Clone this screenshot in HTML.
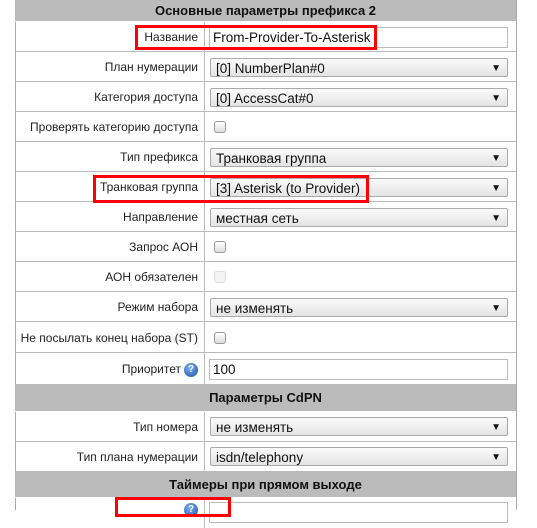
<!DOCTYPE html>
<html><head><meta charset="utf-8"><style>
body{margin:0;width:537px;height:510px;overflow:hidden;background:#fff;font-family:"Liberation Sans",Arial,sans-serif;font-size:12px;color:#222;position:relative}
.t{position:absolute;left:15px;width:500px;border-left:1px solid #aaa;border-right:1px solid #aaa}
.r{position:absolute;left:15px;width:501px;border-bottom:1px solid #bbb;box-sizing:border-box}
.h{background:#bbb;font-weight:bold;text-align:center;border-bottom:1px solid #fff;color:#111;font-size:13px}
.l{position:absolute;left:0;width:183px;text-align:right;white-space:nowrap}
.d{position:absolute;left:189px;top:0;bottom:0;border-left:1px solid #bbb}
.s{position:absolute;left:195px;width:298px;height:19px;border:1px solid #aaa;border-radius:2px;background:linear-gradient(#fafafa,#e4e4e4);font-size:13.5px;line-height:19px;padding-left:5px;box-sizing:border-box;color:#111}
.s:after{content:"▼";position:absolute;right:6px;top:0;font-size:10px}
.i{position:absolute;left:194px;width:299px;height:21px;border:1px solid #bbb;font-size:13.5px;line-height:20px;padding-left:3px;box-sizing:border-box;color:#111}
.c{position:absolute;left:199px;width:12px;height:12px;border:1px solid #999;border-radius:3px;background:linear-gradient(#fff,#ddd);box-sizing:border-box}
.q{display:inline-block;width:14px;height:14px;border-radius:50%;background:radial-gradient(circle at 40% 35%,#7ab0f0,#1c4fa8);color:#fff;font-size:10px;line-height:14px;text-align:center;font-weight:bold;vertical-align:middle;margin-left:3px}
.red{position:absolute;border:3px solid #f00;box-sizing:border-box}
</style></head><body>
<div class="t" style="top:0;height:510px"></div>
<div class="r h" style="top:0;height:22px;line-height:21px">Основные параметры префикса 2</div>

<div class="r" style="top:22px;height:30px"><div class="d"></div><div class="l" style="top:8px">Название</div><div class="i" style="top:5px">From-Provider-To-Asterisk</div></div>
<div class="r" style="top:52px;height:30px"><div class="d"></div><div class="l" style="top:8px">План нумерации</div><div class="s" style="top:6px">[0] NumberPlan#0</div></div>
<div class="r" style="top:82px;height:30px"><div class="d"></div><div class="l" style="top:8px">Категория доступа</div><div class="s" style="top:6px">[0] AccessCat#0</div></div>
<div class="r" style="top:112px;height:30px"><div class="d"></div><div class="l" style="top:8px">Проверять категорию доступа</div><div class="c" style="top:9px"></div></div>
<div class="r" style="top:142px;height:30px"><div class="d"></div><div class="l" style="top:8px">Тип префикса</div><div class="s" style="top:6px">Транковая группа</div></div>
<div class="r" style="top:172px;height:30px"><div class="d"></div><div class="l" style="top:8px">Транковая группа</div><div class="s" style="top:6px">[3] Asterisk (to Provider)</div></div>
<div class="r" style="top:202px;height:30px"><div class="d"></div><div class="l" style="top:8px">Направление</div><div class="s" style="top:6px">местная сеть</div></div>
<div class="r" style="top:232px;height:30px"><div class="d"></div><div class="l" style="top:8px">Запрос АОН</div><div class="c" style="top:9px"></div></div>
<div class="r" style="top:262px;height:30px"><div class="d"></div><div class="l" style="top:8px">АОН обязателен</div><div class="c" style="top:9px;border-color:#ddd;background:#f4f4f4"></div></div>
<div class="r" style="top:292px;height:30px"><div class="d"></div><div class="l" style="top:8px">Режим набора</div><div class="s" style="top:6px">не изменять</div></div>
<div class="r" style="top:322px;height:31px"><div class="d"></div><div class="l" style="top:9px">Не посылать конец набора (ST)</div><div class="c" style="top:10px"></div></div>
<div class="r" style="top:353px;height:32px"><div class="d"></div><div class="l" style="top:9px">Приоритет<span class="q">?</span></div><div class="i" style="top:6px">100</div></div>
<div class="r h" style="top:385px;height:27px;line-height:26px">Параметры CdPN</div>
<div class="r" style="top:412px;height:30px"><div class="d"></div><div class="l" style="top:8px">Тип номера</div><div class="s" style="top:5px">не изменять</div></div>
<div class="r" style="top:442px;height:30px"><div class="d"></div><div class="l" style="top:8px">Тип плана нумерации</div><div class="s" style="top:5px">isdn/telephony</div></div>
<div class="r h" style="top:472px;height:26px;line-height:25px">Таймеры при прямом выходе</div>
<div class="r" style="top:498px;height:30px;border:none"><div class="d"></div><div class="l" style="top:4px"><span class="q">?</span></div><div class="i" style="top:4px"></div></div>

<div class="red" style="left:135px;top:25px;width:242px;height:25px"></div>
<div class="red" style="left:93px;top:175px;width:276px;height:28px"></div>
<div class="red" style="left:115px;top:497px;width:116px;height:20px"></div>
</body></html>
